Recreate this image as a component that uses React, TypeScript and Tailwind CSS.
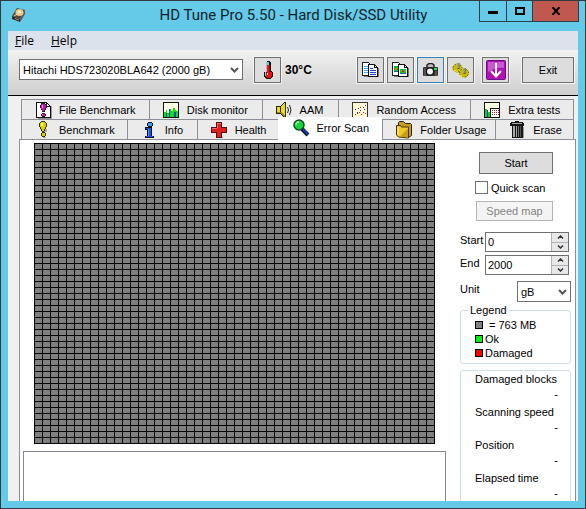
import React, { useState } from 'react';

const blocks = Array.from({ length: 2500 }, (_, i) => i);

const legend = [
  { label: '= 763 MB', color: 'bg-[#808080]', gap: 'gap-1.5' },
  { label: 'Ok', color: 'bg-[#00f010]', gap: 'gap-0.5' },
  { label: 'Damaged', color: 'bg-[#ff0000]', gap: 'gap-0.5' },
];

const stats = [
  { label: 'Damaged blocks', value: '-' },
  { label: 'Scanning speed', value: '-' },
  { label: 'Position', value: '-' },
  { label: 'Elapsed time', value: '-' },
];

function DiskIcon() {
  return (
    <svg width="16" height="16" viewBox="0 0 16 16">
      <path d="M1 9 6 1l8 2-5 9z" fill="#5b4a3c" />
      <path d="M1 9l8 3v3l-8-3z" fill="#2b2b2e" />
      <path d="M9 12l5-9v4l-5 8z" fill="#55555a" />
      <path d="M4 11l4 1.500v1l-4-1.500z" fill="#c98b62" />
      <ellipse cx="8.500" cy="5.500" rx="4" ry="3.600" fill="#e8c684" />
      <ellipse cx="8.500" cy="5" rx="1.800" ry="1.500" fill="#fff3cf" />
      <path d="M3 9l3-2" stroke="#ddd" />
    </svg>
  );
}

function ThermometerIcon() {
  return (
    <svg width="14" height="18" viewBox="0 0 14 18" shapeRendering="crispEdges">
      <path d="M6 0h3v1h1v9h1v1h1v5h-1v1h-1v1H5v-1H4v-1H3v-5h2V1h1z" fill="#111" />
      <path d="M6 1h2v3H6z" fill="#7fc8d0" />
      <path d="M6 4h3v7h2v4h-1v2H6v-1H5v-4h1z" fill="#ee1010" />
      <path d="M5 1h1v10H5v4H4v-4h1z" fill="#8cc" />
      <path d="M6 12h1v2H6z" fill="#fff" />
      <path d="M8 4h1v7H8z" fill="#a00" />
    </svg>
  );
}

function CopyTextIcon() {
  return (
    <svg width="17" height="16" viewBox="0 0 17 16" shapeRendering="crispEdges">
      <path d="M2 14h4v1H2zM8 15h9V6h-1v8H8z" fill="#777" />
      <path d="M.5.5h6l2 2v11h-8z" fill="#fff" stroke="#222" />
      <path d="M2 4.500h4M2 6.500h4M2 8.500h4M2 10.500h4" stroke="#3ab4f0" />
      <path d="M6.500 2.500h6l3 3v9h-9z" fill="#fff" stroke="#111" />
      <path d="M12 2h1v3h3v1h-4z" fill="#111" />
      <path d="M8 6.500h3M8 8.500h6M8 10.500h6M8 12.500h6" stroke="#2040e0" />
    </svg>
  );
}

function CopyImageIcon() {
  return (
    <svg width="17" height="16" viewBox="0 0 17 16" shapeRendering="crispEdges">
      <path d="M2 14h4v1H2zM8 15h9V6h-1v8H8z" fill="#777" />
      <path d="M.5.5h6l2 2v11h-8z" fill="#fff" stroke="#222" />
      <path d="M2 4h4v6H2z" fill="#12b92c" />
      <path d="M3 6h2v2H3z" fill="#f07020" />
      <path d="M2 9h4v1H2z" fill="#2060a0" />
      <path d="M6.500 2.500h6l3 3v9h-9z" fill="#fff" stroke="#111" />
      <path d="M12 2h1v3h3v1h-4z" fill="#111" />
      <path d="M8 7h6v5H8z" fill="#12c92c" />
      <path d="M10 8h2v2h-2z" fill="#e03010" />
      <path d="M8 11h6v1H8z" fill="#2060a0" />
    </svg>
  );
}

function CameraIcon() {
  return (
    <svg width="17" height="14" viewBox="0 0 17 14">
      <path d="M5 4V2l2-1.500h3L12 2v2" fill="#bbb" stroke="#222" strokeWidth="1.500" />
      <rect x="1" y="4" width="15" height="9" rx="1" fill="#333" />
      <path d="M3 5v8M14 8v5" stroke="#777" />
      <circle cx="8" cy="8.500" r="4.200" fill="#111" />
      <circle cx="8" cy="8.500" r="3" fill="#f2f2f2" />
      <rect x="12" y="5" width="3" height="2" fill="#20e060" />
    </svg>
  );
}

function GearsIcon() {
  return (
    <svg width="18" height="17" viewBox="0 0 18 17">
      <ellipse cx="5.500" cy="6" rx="4.500" ry="4" fill="#c8bc00" stroke="#6b6508" />
      <ellipse cx="5.500" cy="6" rx="4.500" ry="4" fill="none" stroke="#e0d820" strokeWidth="1.500" strokeDasharray="1 2" />
      <ellipse cx="12" cy="11" rx="4.500" ry="4.200" fill="#c8bc00" stroke="#6b6508" />
      <ellipse cx="12" cy="11" rx="4.500" ry="4.200" fill="none" stroke="#e0d820" strokeWidth="1.500" strokeDasharray="1 2" />
      <path d="M2 8l3 2M8 13l4 3" stroke="#f5ef60" />
      <path d="M6.500 1v6M12.500 6v6" stroke="#555" strokeWidth="2" />
      <path d="M6 1v5M12 6v5" stroke="#ccc" />
    </svg>
  );
}

function DownArrowIcon() {
  return (
    <svg width="20" height="20" viewBox="0 0 20 20">
      <rect x=".5" y=".5" width="19" height="19" rx="1" fill="#b010b8" stroke="#770a80" />
      <path d="M2 2h16v6Q10 7 2 12z" fill="#ce55d4" />
      <path d="M10 3v13M5 11l5 5.500 5-5.500" fill="none" stroke="#fff" strokeWidth="2" />
    </svg>
  );
}

function Exclamation({ color, light }: { color: string; light: string }) {
  return (
    <>
      <path d="M7 2h4v1h1v1h1v3h-1v2h-1v2H8V9H7V7H6V4h1z" fill="#222" />
      <path d="M8 3h3v1h1v3h-1v2h-1v1H8V8H7V4h1z" fill={color} />
      <path d="M8 4h1v3H8z" fill={light} />
      <path d="M8 12h3v1h1v2h-1v1H8v-1H7v-2h1z" fill="#222" />
      <path d="M8 13h3v2H8z" fill={color} />
      <path d="M8 13h1v1H8z" fill={light} />
    </>
  );
}

function TabIcon({ name }: { name: string }) {
  return (
    <svg width="18" height="18" viewBox="0 0 18 18" shapeRendering="crispEdges" className="shrink-0">
      {name === 'file' && (
        <>
          <path d="M4 17h13V5h1v13H4z" fill="#999" />
          <path d="M2.500 1.500h10l4 4v11h-14z" fill="#fff" stroke="#111" />
          <path d="M12 1h1v4h4v1h-5z" fill="#111" />
          <Exclamation color="#c010b8" light="#ff9cff" />
        </>
      )}
      {name === 'monitor' && (
        <>
          <rect x="1.500" y="1.500" width="15" height="15" fill="#ffffe6" stroke="#111" />
          <path d="M2 16V11h2v-2h1v3h2V8h2v2h2V7h2v2h1v1h2v6z" fill="#12e012" />
          <path d="M4 12h1v4H4zM7 8h1v8H7zM12 11h2v5h-2z" fill="#1440d8" />
        </>
      )}
      {name === 'speaker' && (
        <>
          <path d="M1 5h4l4-4h2v16H9l-4-4H1z" fill="#222" />
          <path d="M2 6h3v6H2z" fill="#f0e000" />
          <path d="M6 6l3-4h1v14H9l-3-4z" fill="#f0e000" />
          <path d="M2 11h4l4 4v1H9l-4-4H2z" fill="#998c00" />
          <path d="M12.500 6q2 3 0 6M14.500 4q3 5 0 10" fill="none" stroke="#222" shapeRendering="auto" />
        </>
      )}
      {name === 'random' && (
        <>
          <rect x="1.500" y="1.500" width="15" height="15" fill="#fff8d0" stroke="#333" />
          <path d="M4 8h1v1H4zM7 7h1v1H7zM9 9h1v1H9zM12 6h1v1h-1zM14 4h1v1h-1zM6 11h1v1H6zM13 8h1v1h-1z" fill="#1030e0" />
          <path d="M4 13h1v1H4zM6 12h1v1H6zM8 11h1v1H8zM10 13h1v1h-1zM12 11h1v1h-1zM14 12h1v1h-1zM9 6h1v1H9z" fill="#e01010" />
        </>
      )}
      {name === 'extra' && (
        <>
          <rect x="1.500" y="1.500" width="15" height="15" fill="#ffffe6" stroke="#111" />
          <path d="M2 8h2v8H2zM4 11h3v5H4z" fill="#12d012" />
          <path d="M4 9h1v7H4z" fill="#1440d8" />
          <rect x="7.500" y="7.500" width="9" height="9" fill="#fff" stroke="#111" />
          <path d="M9 9.500h7M9 11.500h7M9 13.500h7" stroke="#e01010" strokeDasharray="1 1" />
          <path d="M9 13h1v1H9zM13 11h1v1h-1z" fill="#1440d8" />
        </>
      )}
      {name === 'benchmark' && (
        <>
          <path d="M8 10h3V8h2v3h-2zM9 16h3v1H9z" fill="#aaa" />
          <path d="M7 0h4v1h1v1h1v4h-1v2h-1v2h-1v1H8v-1H7V8H6V6H5V2h1V1h1z" fill="#333200" />
          <path d="M7 1h4v1h1v4h-1v2h-1v2H8V8H7V6H6V2h1z" fill="#d8d000" />
          <path d="M7 2h2v3H7z" fill="#ffff90" />
          <path d="M8 11h3v1h1v3h-1v1H8v-1H7v-3h1z" fill="#333200" />
          <path d="M8 12h3v3H8z" fill="#d8d000" />
        </>
      )}
      {name === 'info' && (
        <>
          <path d="M8 1h4v1h1v3h-1v1H8V5H7V2h1z" fill="#111" />
          <path d="M8 2h4v3H8z" fill="#30a0f0" />
          <path d="M5 6h7v9h2v2H5v-2h2V9H5z" fill="#111" />
          <path d="M6 7h5v9H8V8H6z" fill="#1450f0" />
          <path d="M6 15h7v1H6z" fill="#1450f0" />
          <path d="M8 8h1v7H8z" fill="#40a0ff" />
        </>
      )}
      {name === 'health' && (
        <>
          <path d="M7 16h6v1H7zM12 11h5v1h-5z" fill="#888" />
          <path d="M6 1h6v5h5v6h-5v5H6v-5H1V6h5z" fill="#511" />
          <path d="M7 2h4v5h5v4h-5v5H7v-5H2V7h5z" fill="#e02020" />
          <path d="M7 2h4v1H8v4H7zM2 7h5v1H2z" fill="#f66" />
        </>
      )}
      {name === 'scan' && (
        <g shapeRendering="auto">
          <path d="M10 10l6 6" stroke="#111" strokeWidth="4" />
          <path d="M11 10l5 5.500" stroke="#1838d0" strokeWidth="2" />
          <circle cx="7" cy="6" r="5" fill="#10d840" stroke="#164a1c" strokeWidth="1.500" />
          <path d="M4 6q0-3 3-3" fill="none" stroke="#a5ffb5" strokeWidth="1.500" />
        </g>
      )}
      {name === 'folder' && (
        <g shapeRendering="auto">
          <path d="M3.500 4.500v-3l1-1h4l2 2h5l1 1v11l-3 2z" fill="#c4a018" stroke="#222" />
          <path d="M1.500 4.500h4l1 1.500h7v11l-10-1-2-2z" fill="#f0c828" stroke="#443600" />
          <path d="M3 6v8" stroke="#fff290" />
          <path d="M5 15.500l8-8v9z" fill="#cb9d15" />
        </g>
      )}
      {name === 'erase' && (
        <>
          <path d="M7 0h4v1h4v1h1v3h-1v12H4V5H2V2h1V1h4z" fill="#151515" />
          <path d="M4 2h10v1H4z" fill="#aaa" />
          <path d="M5 5h2v11H5zM8 5h1v11H8z" fill="#aaa" />
          <path d="M10 5h1v11h-1z" fill="#777" />
          <path d="M12 5h1v11h-1z" fill="#555" />
          <path d="M15 6h1v11h-1z" fill="#999" />
        </>
      )}
    </svg>
  );
}

function Chevron() {
  return (
    <svg width="9" height="6" viewBox="0 0 9 6" className="pointer-events-none absolute right-1 top-1/2 -translate-y-1/2">
      <path d="M1 1l3.500 3.500L8 1" fill="none" stroke="#555" strokeWidth="2" />
    </svg>
  );
}

const toolButtons = [
  { label: 'Copy text', icon: <CopyTextIcon />, border: 'border-[#707070]' },
  { label: 'Copy screenshot', icon: <CopyImageIcon />, border: 'border-[#707070]' },
  { label: 'Save screenshot', icon: <CameraIcon />, border: 'border-[#3c7fb1]' },
  { label: 'Options', icon: <GearsIcon />, border: 'border-[#707070]' },
];

const topTabs = [
  { id: 'file', label: 'File Benchmark', pad: 'pl-3' },
  { id: 'monitor', label: 'Disk monitor', pad: 'pl-3' },
  { id: 'speaker', label: 'AAM', pad: 'pl-3' },
  { id: 'random', label: 'Random Access', pad: 'pl-3' },
  { id: 'extra', label: 'Extra tests', pad: 'pl-3' },
];

const bottomTabs = [
  { id: 'benchmark', label: 'Benchmark', pad: 'pl-3' },
  { id: 'info', label: 'Info', pad: 'pl-3' },
  { id: 'health', label: 'Health', pad: 'pl-3' },
  { id: 'scan', label: 'Error Scan', pad: 'pl-3.5' },
  { id: 'folder', label: 'Folder Usage', pad: 'pl-3' },
  { id: 'erase', label: 'Erase', pad: 'pl-3' },
];

function Tab({ tab, active, onSelect }: { tab: { id: string; label: string; pad: string }; active: boolean; onSelect: () => void }) {
  return (
    <button
      role="tab"
      aria-selected={active}
      onClick={onSelect}
      className={`flex items-center gap-[7px] whitespace-nowrap ${tab.pad} ${
        active ? 'relative z-10 -mt-0.5 -mb-px bg-white pb-0.5' : 'border-l border-t border-[#8c8e98] bg-[#ebebeb]'
      }`}
    >
      <TabIcon name={tab.id} />
      {tab.label}
    </button>
  );
}

function NumberField({ id, label, value, onChange }: { id: string; label: string; value: number; onChange: (v: number) => void }) {
  return (
    <div className="flex">
      <label htmlFor={id} className="w-[25px] shrink-0 leading-[17px]">{label}</label>
      <div className="flex h-5 min-w-0 flex-1 border border-[#707070] bg-white">
        <input
          id={id}
          value={value}
          onChange={(e) => onChange(Number(e.target.value) || 0)}
          className="w-full min-w-0 pl-0.5 outline-none"
        />
        <div className="flex w-[17px] shrink-0 flex-col gap-px bg-[#b0b0b8] pl-px">
          <button aria-label={`Increase ${label}`} onClick={() => onChange(value + 1)} className="flex flex-1 items-center justify-center bg-[#e8e8e8]">
            <svg width="7" height="4" viewBox="0 0 7 4"><path d="M1 3.500l2.500-2.500L6 3.500" fill="none" stroke="#333" strokeWidth="1.500" /></svg>
          </button>
          <button aria-label={`Decrease ${label}`} onClick={() => onChange(value - 1)} className="flex flex-1 items-center justify-center bg-[#e8e8e8]">
            <svg width="7" height="4" viewBox="0 0 7 4"><path d="M1 .5L3.500 3 6 .5" fill="none" stroke="#333" strokeWidth="1.500" /></svg>
          </button>
        </div>
      </div>
    </div>
  );
}

export default function App() {
  const [activeTab, setActiveTab] = useState('scan');
  const [start, setStart] = useState(0);
  const [end, setEnd] = useState(2000);

  return (
    <div className="flex h-screen flex-col border border-[#333a3f] bg-[#65c9e8] font-['Liberation_Sans',sans-serif] text-[11px] leading-4 text-black">
      {/* Title bar */}
      <header className="flex h-[30px] shrink-0">
        <div className="flex w-[107px] items-start pl-2.5 pt-1.5">
          <DiskIcon />
        </div>
        <h1 className="flex-1 whitespace-nowrap pt-1 text-center font-['Roboto',sans-serif] text-[15px] leading-5 text-[#13242c]">
          HD Tune Pro 5.50 - Hard Disk/SSD Utility
        </h1>
        <div className="mr-1.5 flex h-[21px] border-x border-b border-[#27414c]">
          <button aria-label="Minimize" className="flex w-[27px] items-center justify-center border-r border-[#27414c]">
            <span className="mt-0.5 h-[3px] w-2.5 bg-black" />
          </button>
          <button aria-label="Maximize" className="flex w-[26px] items-center justify-center border-r border-[#27414c]">
            <span className="h-2 w-2.5 border-2 border-black" />
          </button>
          <button aria-label="Close" className="flex w-[45px] items-center justify-center bg-[#c1584f]">
            <svg width="10" height="8" viewBox="0 0 10 8"><path d="M1.500 0l7 8M8.500 0l-7 8" stroke="#000" strokeWidth="2" /></svg>
          </button>
        </div>
      </header>

      <div className="mx-[7px] mb-[7px] flex min-h-0 flex-1 flex-col overflow-hidden bg-[#f0f0f0]">
        {/* Menu */}
        <nav className="flex h-[19px] shrink-0 gap-[17px] bg-[#dbe2eb] pl-[7px] font-['Open_Sans',sans-serif] text-[12px] leading-5">
          <button><u>F</u>ile</button>
          <button><u>H</u>elp</button>
        </nav>

        {/* Toolbar */}
        <div className="flex h-[46px] shrink-0 items-start border-b border-black bg-linear-to-b from-[#f2f2f2] to-[#cecece] pl-[11px] pr-1 pt-[7px]">
          <div className="relative mt-0.5 flex-1">
            <select aria-label="Drive" className="h-[21px] w-full appearance-none border border-[#707070] bg-white pl-[3px] leading-4">
              <option>Hitachi HDS723020BLA642 (2000 gB)</option>
            </select>
            <Chevron />
          </div>
          <button aria-label="Temperature" className="ml-[11px] flex h-[26px] w-[27px] items-center justify-center border border-[#707070] bg-[#dddddd] outline outline-[#f4f4f4]">
            <ThermometerIcon />
          </button>
          <span className="ml-1 w-[72px] text-[12px] font-bold leading-[26px]">30°C</span>
          <div className="flex gap-[3px]">
            {toolButtons.map((button) => (
              <button
                key={button.label}
                aria-label={button.label}
                className={`flex h-[26px] w-[27px] items-center justify-center border bg-[#dddddd] outline outline-[#f4f4f4] ${button.border}`}
              >
                {button.icon}
              </button>
            ))}
          </div>
          <button aria-label="Update" className="ml-2 flex h-[26px] w-[27px] items-center justify-center border border-[#707070] bg-[#dddddd] outline outline-[#f4f4f4]">
            <DownArrowIcon />
          </button>
          <button className="ml-[13px] h-[26px] w-[52px] border border-[#707070] bg-[#dddddd] outline outline-[#f4f4f4]">Exit</button>
        </div>

        {/* Tabs */}
        <div role="tablist" className="ml-[13px] mr-1 mt-[3px] shrink-0">
          <div className="grid h-5 grid-cols-[128fr_113fr_77fr_132fr_103fr] border-r border-[#8c8e98]">
            {topTabs.map((tab) => (
              <Tab key={tab.id} tab={tab} active={activeTab === tab.id} onSelect={() => setActiveTab(tab.id)} />
            ))}
          </div>
          <div className="grid h-5 grid-cols-[106fr_70fr_81fr_105fr_113fr_78fr] border-r border-[#8c8e98]">
            {bottomTabs.map((tab) => (
              <Tab key={tab.id} tab={tab} active={activeTab === tab.id} onSelect={() => setActiveTab(tab.id)} />
            ))}
          </div>
        </div>

        {/* Error scan panel */}
        <main className="ml-[11px] mr-0.5 flex min-h-0 flex-1 justify-between overflow-hidden border-x border-t border-[#8c8e98] bg-white pl-[3px] pr-1">
          <div className="flex w-[423px] flex-col pt-[3px]">
            <div className="ml-[11px] grid w-[401px] auto-rows-[5px] grid-cols-[repeat(50,7px)] gap-px bg-black p-px">
              {blocks.map((block) => (
                <span key={block} className="bg-[#808080]" />
              ))}
            </div>
            <div className="mt-[7px] flex-1 border-x border-t border-[#828790]" />
          </div>

          <div className="w-[111px] shrink-0">
            <div className="flex flex-col pl-[15px] pr-[18px] pt-3">
              <button className="ml-1 h-[22px] border border-[#707070] bg-[#dddddd]">Start</button>
              <label className="mt-[7px] flex h-[13px] items-center gap-[3px] whitespace-nowrap">
                <input type="checkbox" className="h-[13px] w-[13px] shrink-0 appearance-none border border-[#707070] bg-white checked:bg-[#3c7fb1]" />
                Quick scan
              </label>
              <button disabled className="ml-px mt-[7px] h-5 border border-[#b5b5b5] bg-[#f4f4f4] text-[#838383]">Speed map</button>
            </div>

            <div className="mt-[11px] flex flex-col gap-[3px] pr-0.5">
              <NumberField id="start" label="Start" value={start} onChange={setStart} />
              <NumberField id="end" label="End" value={end} onChange={setEnd} />
            </div>
            <div className="mt-1.5 flex justify-between">
              <label htmlFor="unit">Unit</label>
              <div className="relative w-[54px]">
                <select id="unit" className="h-[21px] w-full appearance-none border border-[#707070] bg-white pl-[3px] leading-4">
                  <option>gB</option>
                  <option>MB</option>
                </select>
                <Chevron />
              </div>
            </div>

            <fieldset className="mt-px rounded-[3px] border border-[#cfdfe4] pb-[3px] pl-3.5">
              <legend className="-ml-[7px] px-0.5 leading-[15px]">Legend</legend>
              {legend.map((item) => (
                <div key={item.label} className={`flex h-[14px] items-center ${item.gap}`}>
                  <span className={`h-2 w-2 border border-black ${item.color}`} />
                  {item.label}
                </div>
              ))}
            </fieldset>

            <dl className="mt-1.5 h-[136px] rounded-[3px] border border-[#cfdfe4] pl-3.5 pr-3">
              {stats.map((stat) => (
                <div key={stat.label} className="h-[33px] whitespace-nowrap">
                  <dt className="leading-4">{stat.label}</dt>
                  <dd className="text-right leading-[14px]">{stat.value}</dd>
                </div>
              ))}
            </dl>
          </div>
        </main>
      </div>
    </div>
  );
}
